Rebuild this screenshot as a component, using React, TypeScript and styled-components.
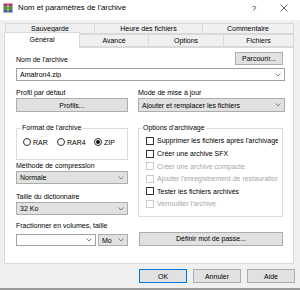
import React from "react";
import styled, { createGlobalStyle } from "styled-components";

const GlobalStyle = createGlobalStyle`
  html, body {
    margin: 0;
    padding: 0;
    background: #f0f0f0;
  }
`;

const Window = styled.div`
  width: 300px;
  height: 290px;
  box-sizing: border-box;
  background: #f0f0f0;
  border-bottom: 2px solid #9a9a9a;
  display: flex;
  flex-direction: column;
  font-family: "Liberation Sans", Arial, sans-serif;
  font-size: 7px;
  color: #000;
  overflow: hidden;
`;

const TitleBar = styled.div`
  height: 20px;
  flex: none;
  background: #fff;
  display: flex;
  align-items: flex-start;
  padding: 3px 1px 0 3px;
  box-sizing: border-box;
  margin-bottom: 3px;
`;

const AppIcon = styled.svg`
  width: 10px;
  height: 10px;
  flex: none;
`;

const Title = styled.div`
  margin-left: 5px;
  font-size: 7.8px;
  line-height: 10px;
  flex: 1;
`;

const TitleButton = styled.div`
  width: 30px;
  height: 10px;
  display: flex;
  align-items: center;
  justify-content: center;
  font-size: 8px;
  color: #222;
`;

const TabRow = styled.div<{ $indent: number; $height: number }>`
  display: flex;
  align-items: flex-end;
  height: ${(p) => p.$height}px;
  padding-left: ${(p) => p.$indent}px;
  flex: none;
`;

const Tab = styled.div<{ $w: number; $active?: boolean }>`
  position: relative;
  width: ${(p) => p.$w}px;
  height: ${(p) => (p.$active ? "16px" : "100%")};
  margin-bottom: ${(p) => (p.$active ? -1 : 0)}px;
  z-index: ${(p) => (p.$active ? 2 : 0)};
  box-sizing: border-box;
  border: 1px solid #d9d9d9;
  border-bottom: ${(p) => (p.$active ? "none" : "1px solid #d9d9d9")};
  margin-right: -1px;
  background: ${(p) => (p.$active ? "#fff" : "#f0f0f0")};
  display: flex;
  align-items: ${(p) => (p.$active ? "flex-start" : "center")};
  padding-top: ${(p) => (p.$active ? 3 : 0)}px;
  justify-content: center;
  line-height: 8px;
`;

const Panel = styled.div`
  position: relative;
  z-index: 1;
  margin: 0 6px 0 4px;
  height: 217px;
  flex: none;
  box-sizing: border-box;
  background: #fff;
  border: 1px solid #d9d9d9;
  padding: 4px 8px 0 11px;
`;

const HeaderRow = styled.div`
  display: flex;
  justify-content: space-between;
  align-items: flex-end;
  height: 13px;
`;

const Label = styled.div<{ $mt?: number }>`
  height: 10px;
  line-height: 10px;
  margin-top: ${(p) => p.$mt ?? 0}px;
  white-space: nowrap;
`;

const PushButton = styled.div<{ $w?: number; $h?: number; $default?: boolean; $ml?: number; $mt?: number; $mr?: number }>`
  width: ${(p) => (p.$w ? `${p.$w}px` : "auto")};
  height: ${(p) => p.$h ?? 14}px;
  margin: ${(p) => p.$mt ?? 0}px ${(p) => p.$mr ?? 0}px 0 ${(p) => p.$ml ?? 0}px;
  box-sizing: border-box;
  background: #e1e1e1;
  border: 1px solid ${(p) => (p.$default ? "#0078d7" : "#adadad")};
  display: flex;
  align-items: center;
  justify-content: center;
  flex: none;
`;

const Combo = styled.div<{ $w?: number; $h?: number; $gray?: boolean; $mt?: number }>`
  width: ${(p) => (p.$w ? `${p.$w}px` : "100%")};
  height: ${(p) => p.$h ?? 13}px;
  margin-top: ${(p) => p.$mt ?? 0}px;
  box-sizing: border-box;
  background: ${(p) => (p.$gray ? "#e1e1e1" : "#fff")};
  border: 1px solid ${(p) => (p.$gray ? "#adadad" : "#a0a0a0")};
  display: flex;
  align-items: center;
  padding: 0 3px 0 3px;
  flex: none;
`;

const ComboText = styled.span`
  flex: 1;
  white-space: nowrap;
  overflow: hidden;
`;

const Chevron = () => (
  <svg width="6" height="4" viewBox="0 0 6 4">
    <polyline points="0.5,0.5 3,3 5.5,0.5" fill="none" stroke="#666" strokeWidth="0.8" />
  </svg>
);

const Columns = styled.div`
  display: grid;
  grid-template-columns: 112px 147px;
  column-gap: 10px;
  margin-top: 7px;
`;

const Column = styled.div`
  display: flex;
  flex-direction: column;
  min-width: 0;
`;

const Group = styled.fieldset<{ $w: number; $mt: number; $pad: string }>`
  width: ${(p) => p.$w}px;
  margin: ${(p) => p.$mt}px 0 0 0;
  padding: ${(p) => p.$pad};
  box-sizing: border-box;
  border: 1px solid #dcdcdc;
  min-width: 0;
`;

const GroupTitle = styled.legend<{ $ml: number }>`
  padding: 0 1px;
  margin-left: ${(p) => p.$ml}px;
  line-height: 8px;
  font-size: 7px;
`;

const RadioRow = styled.div`
  display: grid;
  grid-template-columns: 34px 37px auto;
  height: 10px;
  align-items: center;
`;

const RadioItem = styled.div`
  display: flex;
  align-items: center;
  gap: 2px;
`;

const RadioCircle = styled.span<{ $checked?: boolean }>`
  width: 8px;
  height: 8px;
  box-sizing: border-box;
  border: 1px solid #333;
  border-radius: 50%;
  display: flex;
  align-items: center;
  justify-content: center;
  &::after {
    content: "";
    width: 4px;
    height: 4px;
    border-radius: 50%;
    background: ${(p) => (p.$checked ? "#111" : "transparent")};
  }
`;

const CheckRow = styled.div<{ $disabled?: boolean }>`
  display: flex;
  align-items: center;
  gap: 3px;
  height: 12.6px;
  color: ${(p) => (p.$disabled ? "#a6a6a6" : "#000")};
  white-space: nowrap;
  overflow: hidden;
`;

const CheckBox = styled.span<{ $disabled?: boolean }>`
  width: 8px;
  height: 8px;
  flex: none;
  box-sizing: border-box;
  border: 1px solid ${(p) => (p.$disabled ? "#cccccc" : "#333")};
  background: #fff;
`;

const SplitRow = styled.div`
  display: flex;
  gap: 2px;
  margin-top: 3px;
`;

const Footer = styled.div`
  display: flex;
  justify-content: flex-end;
  gap: 6px;
  padding-right: 5px;
  margin-top: 5px;
`;

const options = [
  { text: "Supprimer les fichiers après l'archivage" },
  { text: "Créer une archive SFX" },
  { text: "Créer une archive compacte", disabled: true },
  { text: "Ajouter l'enregistrement de restauration", disabled: true },
  { text: "Tester les fichiers archivés" },
  { text: "Verrouiller l'archive", disabled: true },
];

export default function App() {
  return (
    <>
      <GlobalStyle />
      <Window>
        <TitleBar>
          <AppIcon viewBox="0 0 10 10">
            <rect x="0.5" y="0.5" width="9" height="3" fill="#9b2d8e" />
            <rect x="0.5" y="3.5" width="9" height="3" fill="#2f9a3c" />
            <rect x="0.5" y="6.5" width="9" height="3" fill="#2d5db5" />
            <rect x="4" y="0" width="2" height="10" fill="#c99a3b" />
          </AppIcon>
          <Title>Nom et paramètres de l'archive</Title>
          <TitleButton>?</TitleButton>
          <TitleButton>
            <svg width="8" height="8" viewBox="0 0 8 8">
              <path d="M0.5 0.5 L7.5 7.5 M7.5 0.5 L0.5 7.5" stroke="#333" strokeWidth="0.8" />
            </svg>
          </TitleButton>
        </TitleBar>

        <TabRow $indent={5} $height={11}>
          <Tab $w={90}>Sauvegarde</Tab>
          <Tab $w={109}>Heure des fichiers</Tab>
          <Tab $w={92}>Commentaire</Tab>
        </TabRow>
        <TabRow $indent={4} $height={13}>
          <Tab $w={76} $active>Général</Tab>
          <Tab $w={70}>Avancé</Tab>
          <Tab $w={76}>Options</Tab>
          <Tab $w={71}>Fichiers</Tab>
        </TabRow>

        <Panel>
          <HeaderRow>
            <Label>Nom de l'archive</Label>
            <PushButton $w={48} $h={13} $mr={2}>
              Parcourir...
            </PushButton>
          </HeaderRow>
          <Combo $mt={3}>
            <ComboText>Amatron4.zip</ComboText>
            <Chevron />
          </Combo>

          <Columns>
            <Column>
              <Label>Profil par défaut</Label>
              <PushButton>Profils...</PushButton>
              <Group $w={112} $mt={12} $pad="5px 0 12px 6px">
                <GroupTitle $ml={-2}>Format de l'archive</GroupTitle>
                <RadioRow>
                  <RadioItem>
                    <RadioCircle />
                    RAR
                  </RadioItem>
                  <RadioItem>
                    <RadioCircle />
                    RAR4
                  </RadioItem>
                  <RadioItem>
                    <RadioCircle $checked />
                    ZIP
                  </RadioItem>
                </RadioRow>
              </Group>
              <Label $mt={1}>Méthode de compression</Label>
              <Combo $gray>
                <ComboText>Normale</ComboText>
                <Chevron />
              </Combo>
              <Label $mt={8}>Taille du dictionnaire</Label>
              <Combo $gray>
                <ComboText>32 Ko</ComboText>
                <Chevron />
              </Combo>
              <Label $mt={6}>Fractionner en volumes, taille</Label>
              <SplitRow>
                <Combo $w={80} $h={12}>
                  <ComboText />
                  <Chevron />
                </Combo>
                <Combo $w={30} $h={12} $gray>
                  <ComboText>Mo</ComboText>
                  <Chevron />
                </Combo>
              </SplitRow>
            </Column>

            <Column>
              <Label>Mode de mise à jour</Label>
              <Combo $gray $h={14}>
                <ComboText>Ajouter et remplacer les fichiers</ComboText>
                <Chevron />
              </Combo>
              <Group $w={145} $mt={12} $pad="2.7px 4px 5.7px 7px">
                <GroupTitle $ml={-4}>Options d'archivage</GroupTitle>
                {options.map((o) => (
                  <CheckRow key={o.text} $disabled={o.disabled}>
                    <CheckBox $disabled={o.disabled} />
                    {o.text}
                  </CheckRow>
                ))}
              </Group>
              <PushButton $w={144} $ml={1} $mt={15}>
                Définir mot de passe...
              </PushButton>
            </Column>
          </Columns>
        </Panel>

        <Footer>
          <PushButton $w={48} $default>OK</PushButton>
          <PushButton $w={48}>Annuler</PushButton>
          <PushButton $w={48}>Aide</PushButton>
        </Footer>
      </Window>
    </>
  );
}
